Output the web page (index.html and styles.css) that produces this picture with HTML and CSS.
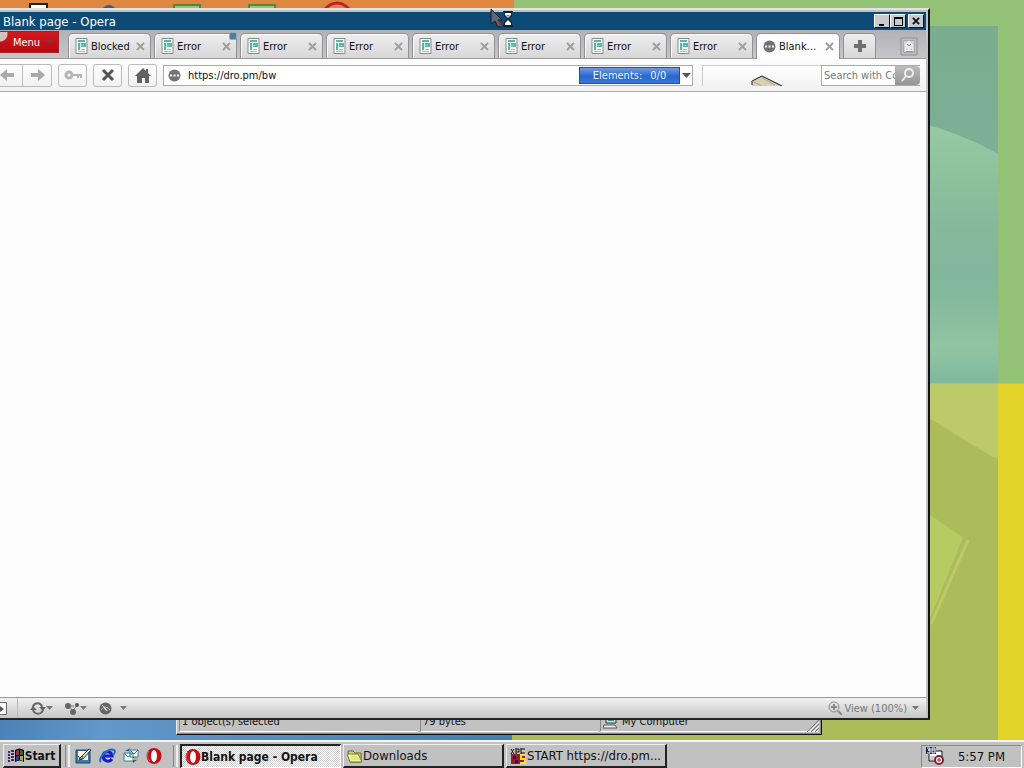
FILE: index.html
```html
<!DOCTYPE html>
<html lang="en">
<head>
    <meta charset="UTF-8">
    <meta name="viewport" content="width=device-width, initial-scale=1.0">
    <title>Blank page - Opera</title>
    <link rel="stylesheet" href="styles.css">
</head>
<body>
    <svg class="symbols" aria-hidden="true">
        <symbol id="page" viewBox="0 0 13 16">
            <path d="M1 .5h11v15H1z" fill="#fff" stroke="#888"/>
            <path d="M3 2h7v2H3zM3 5h2v7H3zM6 5h5v4H6z" fill="#55b9a5"/>
            <path d="M6 7.500h3M3 13.500h7M6 11.500h4" stroke="#a5bbb4"/>
            <path d="M5.500 4v8" stroke="#d7f3ee"/>
        </symbol>
        <symbol id="cross" viewBox="0 0 9 9">
            <path d="M1 1l7 7M8 1L1 8" stroke="currentColor" stroke-width="2"/>
        </symbol>
        <symbol id="arrow" viewBox="0 0 15 12">
            <path d="M0 6l7-6v4h7v4H7v4z" fill="#aaa"/>
        </symbol>
        <symbol id="globe" viewBox="0 0 13 13">
            <circle cx="6.500" cy="6.500" r="6" fill="#737373"/>
            <path d="M2 6.500h2M5.500 6.500h2M9 6.500h2" stroke="#fff" stroke-width="2"/>
        </symbol>
        <symbol id="opera" viewBox="0 0 16 16">
            <ellipse cx="8" cy="8" rx="7.500" ry="8" fill="#c50c17"/>
            <ellipse cx="8" cy="8" rx="3" ry="6" fill="#fff"/>
            <path d="M3 3C1 6 1 10 4 13" fill="none" stroke="#ee5960"/>
        </symbol>
        <symbol id="down" viewBox="0 0 7 4">
            <path d="M0 0h7L3.500 4z" fill="currentColor"/>
        </symbol>
    </svg>

    <main class="desktop">
        <svg class="wallpaper" viewBox="0 0 1024 741" preserveAspectRatio="none" aria-hidden="true">
            <defs>
                <linearGradient id="teal" x2="0" y2="1">
                    <stop offset="0" stop-color="#79ad8d"/>
                    <stop offset=".3" stop-color="#7eae96"/>
                    <stop offset=".75" stop-color="#84b89d"/>
                    <stop offset=".9" stop-color="#91c4a1"/>
                    <stop offset="1" stop-color="#7fb79f"/>
                </linearGradient>
                <linearGradient id="mist" x2="0" y2="1">
                    <stop offset="0" stop-color="#98c9a4"/>
                    <stop offset=".4" stop-color="#8dbf9d"/>
                    <stop offset="1" stop-color="#84b89d" stop-opacity="0"/>
                </linearGradient>
                <linearGradient id="blue">
                    <stop offset="0" stop-color="#4b83b8"/>
                    <stop offset=".2" stop-color="#6297c9"/>
                    <stop offset="1" stop-color="#437fae"/>
                </linearGradient>
            </defs>
            <path d="M0 0h1024v741H0z" fill="#93c276"/>
            <path d="M0 0h514v380H0z" fill="#df8741"/>
            <path d="M920 26h78v358h-78z" fill="url(#teal)"/>
            <path d="M920 123q40 10 78 31v130h-78z" fill="url(#mist)"/>
            <path d="M512 384h486v357H512z" fill="#adbc5a"/>
            <path d="M920 384h78v75l-6-2-72-44z" fill="#bdca69"/>
            <path d="M920 509l43 29-35 86h-8z" fill="#b8ca62"/>
            <path d="M968 541l-37 84" stroke="#bdca69" stroke-width="3"/>
            <path d="M998 384h26v357h-26z" fill="#e2d42b"/>
            <path d="M0 384h512v357H0z" fill="url(#blue)"/>
            <!-- tops of the desktop icons -->
            <path d="M30 9V4h17v5" fill="#fff" stroke="#222" stroke-width="2"/>
            <path d="M102 9q7-8 14 0z" fill="#2463a9"/>
            <path d="M174 9V5h26v4M249 9V5h26v4" fill="#9ac56b" stroke="#55843a" stroke-width="2"/>
            <path d="M325 9q12-12 24 0" fill="none" stroke="#c51d29" stroke-width="3"/>
        </svg>

        <section class="window explorer" aria-label="Explorer">
            <footer class="explorer-status">
                <span class="cell">1 object(s) selected</span>
                <span class="cell size">79 bytes</span>
                <span class="cell zone">
                    <svg width="15" height="14" viewBox="0 0 15 14"><path d="M3 0h10v8H3z" fill="#ddd" stroke="#333"/><path d="M5 2h6v4H5z" fill="#31968d"/><path d="M1 10h11l2 3H0z" fill="#eee" stroke="#555"/></svg>
                    My Computer
                </span>
                <svg class="grip" width="13" height="13"><path d="M1 13L13 1M5 13l8-8M9 13l4-4" stroke="#777"/><path d="M3 13L13 3M7 13l6-6" stroke="#fff"/></svg>
            </footer>
        </section>

        <section class="window opera">
            <header class="titlebar">
                <h1>Blank page - Opera</h1>
                <button class="caption" aria-label="Minimize"><svg width="9" height="9"><path d="M1 7h5v2H1z"/></svg></button>
                <button class="caption" aria-label="Maximize"><svg width="9" height="9"><path d="M0 0h9v9H0zM1 2v6h7V2z" fill-rule="evenodd"/></svg></button>
                <button class="caption close" aria-label="Close"><svg width="8" height="8"><use href="#cross"/></svg></button>
            </header>

            <nav class="tabs">
                <button class="menu">Menu <svg width="7" height="4"><use href="#down"/></svg></button>
                <div class="tab"><button class="label"><svg width="13" height="16"><use href="#page"/></svg>Blocked</button><button class="x" aria-label="Close tab"><svg width="9" height="9"><use href="#cross"/></svg></button></div>
                <div class="tab unread"><button class="label"><svg width="13" height="16"><use href="#page"/></svg>Error</button><button class="x" aria-label="Close tab"><svg width="9" height="9"><use href="#cross"/></svg></button></div>
                <div class="tab"><button class="label"><svg width="13" height="16"><use href="#page"/></svg>Error</button><button class="x" aria-label="Close tab"><svg width="9" height="9"><use href="#cross"/></svg></button></div>
                <div class="tab"><button class="label"><svg width="13" height="16"><use href="#page"/></svg>Error</button><button class="x" aria-label="Close tab"><svg width="9" height="9"><use href="#cross"/></svg></button></div>
                <div class="tab"><button class="label"><svg width="13" height="16"><use href="#page"/></svg>Error</button><button class="x" aria-label="Close tab"><svg width="9" height="9"><use href="#cross"/></svg></button></div>
                <div class="tab"><button class="label"><svg width="13" height="16"><use href="#page"/></svg>Error</button><button class="x" aria-label="Close tab"><svg width="9" height="9"><use href="#cross"/></svg></button></div>
                <div class="tab"><button class="label"><svg width="13" height="16"><use href="#page"/></svg>Error</button><button class="x" aria-label="Close tab"><svg width="9" height="9"><use href="#cross"/></svg></button></div>
                <div class="tab"><button class="label"><svg width="13" height="16"><use href="#page"/></svg>Error</button><button class="x" aria-label="Close tab"><svg width="9" height="9"><use href="#cross"/></svg></button></div>
                <div class="tab active"><button class="label"><svg width="13" height="13"><use href="#globe"/></svg>Blank...</button><button class="x" aria-label="Close tab"><svg width="9" height="9"><use href="#cross"/></svg></button></div>
                <button class="new-tab" aria-label="New tab"><svg width="12" height="12"><path d="M4 0h4v4h4v4H8v4H4V8H0V4h4z" fill="#707070"/></svg></button>
                <button class="trash" aria-label="Closed tabs"><svg width="18" height="19" viewBox="0 0 18 19"><path d="M1 1h16v17H1z" fill="#c0bfc5" stroke="#8f8e96"/><path d="M3.500 3.500h11v12h-11z" fill="#cfced3" stroke="#aaa9b1"/><path d="M5 13.500h8l-1-4H6z" fill="none" stroke="#eee"/><path d="M5 9l4-4 4 4M7 10l2 2 2-2" fill="none" stroke="#eee" stroke-width="2"/><path d="M7 7l2 2 2-2M6 14.500h7" fill="none" stroke="#96959d"/></svg></button>
            </nav>

            <div class="toolbar">
                <div class="history">
                    <button class="tool" aria-label="Back"><svg width="15" height="12"><use href="#arrow"/></svg></button>
                    <button class="tool forward" aria-label="Forward"><svg width="15" height="12"><use href="#arrow"/></svg></button>
                </div>
                <button class="tool" aria-label="Wand"><svg width="18" height="10"><circle cx="5" cy="5" r="3" fill="none" stroke="#b5b5b5" stroke-width="3"/><path d="M8 5h10M14 5v3M17 5v3" stroke="#b5b5b5" stroke-width="2"/></svg></button>
                <button class="tool" aria-label="Stop"><svg width="14" height="14"><path d="M2 2l10 10M12 2L2 12" stroke="#555" stroke-width="3"/></svg></button>
                <button class="tool" aria-label="Home"><svg width="16" height="15"><path d="M0 8l8-8 3 3V1h2v4l3 3h-2v7h-4v-5H7v5H2V8z" fill="#626262"/></svg></button>
                <div class="address">
                    <svg width="13" height="13"><use href="#globe"/></svg>
                    <input type="text" value="https://dro.pm/bw" aria-label="Address">
                    <div class="progress"><span>Elements:</span><span>0/0</span></div>
                    <button class="drop" aria-label="History"><svg width="9" height="5" viewBox="0 0 7 4"><use href="#down"/></svg></button>
                </div>
                <div class="animation"><svg width="32" height="11" viewBox="0 0 32 11"><path d="M1 6L11 1l20 10H1z" fill="#d6d0b7"/><path d="M1 10V6l10-5 20 10" fill="none" stroke="#111"/><path d="M1 6l10 5M11 3l13 7" stroke="#aaa487"/></svg></div>
                <div class="search">
                    <input type="text" placeholder="Search with Comodo" aria-label="Search">
                    <button class="go" aria-label="Search"><svg width="14" height="14"><circle cx="8" cy="5" r="4" fill="none" stroke="#eee" stroke-width="2"/><path d="M5 8l-4 5" stroke="#eee" stroke-width="2"/></svg></button>
                </div>
            </div>

            <div class="content"></div>

            <footer class="statusbar">
                <button class="panel" aria-label="Panels"><svg width="7" height="13"><path d="M0 .5h6.500v12H0" fill="#fff" stroke="#666"/><path d="M0 4l4 3-4 3z" fill="#555"/></svg></button>
                <button class="status-tool" aria-label="Sync"><svg width="16" height="13"><path d="M3 5c1-5 8-5 9 0M13 8c-2 5-8 5-10 0" fill="none" stroke="#666" stroke-width="2"/><path d="M9 5h7l-3 4zM0 8l3-4 4 4z" fill="#666"/></svg><svg width="7" height="4"><use href="#down"/></svg></button>
                <button class="status-tool" aria-label="Unite"><svg width="15" height="13"><path d="M4 4l4 5 4-6M5 4h4" fill="none" stroke="#777"/><circle cx="3" cy="4" r="3" fill="#666"/><circle cx="8" cy="10" r="3" fill="#666"/><circle cx="12" cy="3" r="2" fill="#555"/></svg><svg width="7" height="4"><use href="#down"/></svg></button>
                <button class="status-tool turbo" aria-label="Turbo"><svg width="13" height="13"><circle cx="6.500" cy="6.500" r="6" fill="#676767"/><path d="M2 8a5 5 0 0 1 9 0M3 3l5 6" fill="none" stroke="#bbb"/><path d="M4 3l5 6-3-1z" fill="#ddd"/></svg><svg width="7" height="4"><use href="#down"/></svg></button>
                <button class="view"><svg width="14" height="14"><circle cx="6" cy="6" r="5" fill="none" stroke="#888"/><path d="M3 6h6M6 3v6M10 10l4 4" stroke="#888" stroke-width="2"/></svg>View (100%)<svg class="view-arrow" width="7" height="4"><use href="#down"/></svg></button>
            </footer>
        </section>

        <svg class="cursor" width="24" height="20" viewBox="0 0 24 20" aria-hidden="true">
            <path d="M1 0l11 11H8l3 6-3 1-3-6-4 3z" fill="#5d6977" stroke="#15202c"/>
            <path d="M8 12l3 5" stroke="#a23635" stroke-width="2"/>
            <path d="M13 2h10v2h-1v3l-3 3 3 3v3h1v2H13v-2h1v-3l3-3-3-3V4h-1z" fill="#142334"/>
            <path d="M15 4h6v2l-3 3-3-3zM18 11l3 3v2h-6v-2z" fill="#fff"/>
            <path d="M16 6h4l-2 2z" fill="#4b85b0"/>
        </svg>
    </main>

    <footer class="taskbar">
        <button class="start"><svg width="17" height="16"><path d="M7 2q4-3 9 0v12q-4-3-9 0z"/><path d="M8 3q2-1 3-1v5H8z" fill="#a52d49"/><path d="M12 2q2 0 3 1v4h-3z" fill="#33652f"/><path d="M8 8h3v4q-2 0-3 1z" fill="#2b3f9b"/><path d="M12 8h3v5l-3-1z" fill="#b5aa3d"/><path d="M0 4h2M3 3h3M0 7h2M3 6h3M0 10h2M3 9h3M0 13h2M3 12h3" stroke="#4c2467" stroke-width="2"/></svg>Start</button>
        <span class="divider"></span>
        <nav class="quick">
            <button aria-label="Show desktop"><svg width="17" height="16"><path d="M1 2h14v13H1z" fill="#397da2" stroke="#164b70"/><path d="M3 3h10v9H3z" fill="#f7f4dd"/><path d="M5 10L14 1l2 1-8 9-4 1zM3 8l3 4 2-4" fill="#ddd" stroke="#333"/></svg></button>
            <button aria-label="Internet Explorer"><svg width="17" height="16"><path d="M13 11c-3 4-9 2-9-3s8-6 9 0H5" fill="none" stroke="#1420c8" stroke-width="3"/><path d="M2 14C-2 11 9-1 15 2c2 1 0 4-1 5" fill="none" stroke="#2468d6" stroke-width="2"/></svg></button>
            <button aria-label="Outlook Express"><svg width="16" height="16"><path d="M1 5h9v8H1zM7 2h8v7H7z" fill="#fff" stroke="#347c9c"/><path d="M1 5l4 4 5-4M7 2l4 4 4-4" fill="none" stroke="#347c9c"/><path d="M2 3l5-3-1 3h3M15 11l-5 4V9z" fill="#195fae"/><path d="M9 11h6" stroke="#cab94a" stroke-width="2"/></svg></button>
            <button aria-label="Opera"><svg width="16" height="16"><use href="#opera"/></svg></button>
        </nav>
        <span class="divider"></span>
        <div class="tasks">
            <button class="task current"><svg width="16" height="16"><use href="#opera"/></svg>Blank page - Opera</button>
            <button class="task"><svg width="16" height="14"><path d="M1 2h5l2 2h6v9H3z" fill="#d5d95d" stroke="#656725"/><path d="M0 5h11l4 8H3z" fill="#f4f6a2" stroke="#777a34"/><path d="M3 8h8M4 10h9" stroke="#d5d95d"/></svg>Downloads</button>
            <button class="task"><svg width="17" height="16"><path d="M1 6h14v10H1z" fill="#9b1938"/><path d="M1 1l3 5M4 1L1 6M6 0v6M6 1h3v3H6M11 0v6M11 1h4M11 5h4" fill="none" stroke="#111"/><path d="M3 8h3v3H3zM5 12h3v3H5z" fill="#28152a"/><path d="M16 7h-5v4h4v4h-5" fill="none" stroke="#ffe32b" stroke-width="2"/></svg>START https://dro.pm...</button>
        </div>
        <div class="tray">
            <svg width="18" height="18"><path d="M3 4h13v10H3z" fill="#fff" stroke="#112"/><path d="M0 0h10v7H0z" fill="#17255c"/><path d="M1 1h3v2H2h2v3H1M6 1h3v5H6zM6 3h3" fill="none" stroke="#fff"/><path d="M4 10h5M4 12h4" stroke="#999"/><circle cx="13" cy="13" r="4" fill="#fff" stroke="#8b1833" stroke-width="2"/><path d="M13 11v4M11 13h4" stroke="#8b1833"/></svg>
            <time datetime="17:57">5:57 PM</time>
        </div>
    </footer>
</body>
</html>
```
FILE: styles.css
```css
* {
    box-sizing: border-box;
}

body {
    margin: 0;
    height: 100vh;
    display: flex;
    flex-direction: column;
    overflow: hidden;
    font-family: Tahoma, "DejaVu Sans Condensed", "DejaVu Sans", sans-serif;
    font-size: 11px;
    color: #111;
}

button, input {
    font: inherit;
    color: inherit;
    margin: 0;
    padding: 0;
    border: 0;
    background: none;
    white-space: nowrap;
}

button {
    display: flex;
    align-items: center;
    justify-content: center;
}

svg {
    flex: none;
}

.symbols {
    position: absolute;
    width: 0;
    height: 0;
}

.desktop {
    position: relative;
    flex: 1;
    min-height: 0;
    overflow: hidden;
}

.wallpaper {
    display: block;
    width: 100%;
    height: 100%;
}

/* windows */
.window {
    position: absolute;
    display: flex;
    flex-direction: column;
    background: #c2c2c2;
}

.explorer {
    left: 176px;
    right: 202px;
    bottom: 5px;
    height: 100px;
    justify-content: flex-end;
    border: 1px solid #111;
    border-left-color: #eee;
    border-top: 0;
    padding: 2px;
    box-shadow: inset -1px -1px #888;
}

.explorer-status {
    display: flex;
    gap: 2px;
    height: 19px;
}

.cell {
    flex: 1;
    display: flex;
    align-items: center;
    gap: 4px;
    padding-left: 2px;
    border-left: 1px solid #888;
    border-bottom: 1px solid #fff;
    line-height: 14px;
}

.cell.size {
    flex: 0 0 178px;
}

.cell.zone {
    flex: 0 0 218px;
}

.grip {
    align-self: flex-end;
    margin-left: -14px;
}

.opera {
    top: 8px;
    left: 0;
    right: 94px;
    bottom: 20px;
    border-top: 2px solid #e3e3df;
    border-right: 2px solid #111;
    border-bottom: 2px solid #222;
    padding-top: 2px;
    padding-right: 2px;
}

.titlebar {
    display: flex;
    align-items: center;
    height: 18px;
    padding: 0 2px 0 3px;
    background: #0d4a75;
    color: #fff;
}

.titlebar h1 {
    flex: 1;
    margin: 0;
    font-size: 13px;
    font-weight: normal;
}

.caption {
    width: 16px;
    height: 14px;
    background: #c8cbd0;
    color: #111;
    border: 1px solid #fff;
    border-right-color: #111;
    border-bottom-color: #111;
}

.caption.close {
    margin-left: 2px;
}

/* tab bar */
.tabs {
    display: flex;
    align-items: flex-end;
    gap: 3px;
    height: 29px;
    background: linear-gradient(#b2b2b6, #c6c6c9);
    border-bottom: 1px solid #999;
}

.menu {
    align-self: flex-start;
    width: 59px;
    height: 22px;
    margin: 1px 6px 0 0;
    padding-left: 8px;
    gap: 6px;
    color: #fff;
    background: radial-gradient(circle at 0 2px, #d2c1bd 7px, transparent 8px), linear-gradient(#d51820, #b70711);
    border: 1px solid #982529;
    border-left: 0;
}

.menu svg {
    color: #84353a;
}

.tab {
    position: relative;
    display: flex;
    align-items: center;
    width: 83px;
    height: 25px;
    background: linear-gradient(#eee, #d7d7d7);
    border: 1px solid #929292;
    border-bottom: 0;
    border-radius: 5px 5px 0 0;
    box-shadow: inset 1px 1px #fafafa;
}

.tab.active {
    width: 84px;
    height: 26px;
    margin-bottom: -1px;
    background: #fdfdfd;
}

.label {
    flex: 1;
    justify-content: flex-start;
    gap: 3px;
    padding-left: 6px;
}

.x {
    width: 20px;
    color: #a0a0a0;
}

.unread::after {
    content: "";
    position: absolute;
    top: -2px;
    right: -1px;
    width: 6px;
    height: 6px;
    border-radius: 2px;
    background: #557b9b;
    border: 1px solid #91adc0;
}

.new-tab {
    width: 33px;
    height: 25px;
    background: linear-gradient(#eee, #d7d7d7);
    border: 1px solid #929292;
    border-bottom: 0;
    border-radius: 5px 5px 0 0;
}

.trash {
    margin: 0 8px 2px auto;
}

/* address row */
.toolbar {
    display: flex;
    align-items: center;
    gap: 6px;
    height: 33px;
    padding-right: 6px;
    background: linear-gradient(#fdfdfd, #f1f1f1);
    border-bottom: 1px solid #aaa;
}

.history {
    display: flex;
}

.tool {
    width: 29px;
    height: 23px;
    background: linear-gradient(#fff, #f1f1f1);
    border: 1px solid #bbb;
    border-radius: 3px;
}

.history .tool {
    width: 23px;
    justify-content: flex-start;
    border-left: 0;
    border-radius: 0;
}

.history .forward {
    justify-content: center;
    width: 29px;
    border-radius: 0 3px 3px 0;
}

.forward svg {
    transform: scaleX(-1);
}

.address {
    flex: 1;
    display: flex;
    align-items: center;
    height: 21px;
    padding-left: 4px;
    background: #fff;
    border: 1px solid #aaa;
}

.address input {
    flex: 1;
    min-width: 0;
    padding-left: 7px;
}

.progress {
    display: flex;
    justify-content: center;
    gap: 8px;
    width: 101px;
    height: 17px;
    line-height: 15px;
    color: #e5f1ff;
    background: linear-gradient(#719bdf, #2867cb 55%, #3978d8);
    border: 1px solid #234e9c;
}

.drop {
    width: 12px;
    color: #555;
}

.animation {
    display: flex;
    align-items: flex-end;
    justify-content: center;
    width: 119px;
    height: 21px;
    margin-left: 3px;
    padding-left: 9px;
    background: linear-gradient(#fff, #f3f3f3);
    border: 1px solid #ccc;
    border-right: 0;
    border-bottom: 0;
}

.search {
    display: flex;
    width: 99px;
    height: 21px;
    margin-left: -6px;
    background: #fff;
    border: 1px solid #aaa;
    border-right: 0;
}

.search input {
    flex: 1;
    min-width: 0;
    padding-left: 2px;
}

.search input::placeholder {
    color: #777;
}

.go {
    width: 25px;
    background: linear-gradient(#bbb, #959595);
    border-radius: 0 4px 4px 0;
}

.content {
    flex: 1;
    background: #fdfdfd;
}

/* status bar */
.statusbar {
    display: flex;
    align-items: center;
    height: 21px;
    padding-right: 7px;
    background: linear-gradient(#f1f1f1, #c6c6c6);
    border-top: 1px solid #999;
    color: #777;
}

.panel {
    align-self: stretch;
    justify-content: flex-start;
    width: 18px;
    margin-right: 11px;
    border-right: 1px solid #bbb;
}

.status-tool {
    width: 24px;
    margin-right: 11px;
}

.status-tool.turbo {
    width: 28px;
    gap: 8px;
}

.view {
    margin-left: auto;
    gap: 2px;
}

.view-arrow {
    margin-left: 3px;
}

.cursor {
    position: absolute;
    top: 9px;
    left: 490px;
}

/* taskbar */
.taskbar {
    display: flex;
    align-items: center;
    height: 28px;
    padding: 2px 2px 0 3px;
    background: #c1c1c1;
    border-top: 2px solid #f5f5f5;
    font-size: 13px;
}

.start, .task {
    height: 24px;
    border: 1px solid #eee;
    border-right: 2px solid #222;
    border-bottom: 2px solid #222;
}

.start {
    width: 58px;
    font-size: 12px;
    font-weight: bold;
}

.divider {
    width: 5px;
    height: 22px;
    margin-left: 4px;
    border-left: 1px solid #888;
    border-right: 2px solid #eee;
}

.quick {
    display: flex;
    gap: 7px;
    margin: 0 7px 0 5px;
}

.tasks {
    flex: 1;
    display: flex;
    gap: 2px;
    margin-left: 2px;
}

.task {
    width: 161px;
    padding: 0 2px 0 3px;
    justify-content: flex-start;
}

.task.current {
    font-size: 12px;
    font-weight: bold;
    background: repeating-conic-gradient(#fff 0 25%, #d1d1d1 0 50%) 0 0 / 2px 2px;
    border: 1px solid #fff;
    border-top: 2px solid #222;
    border-left: 2px solid #222;
}

.tray {
    display: flex;
    align-items: center;
    justify-content: space-between;
    width: 101px;
    height: 23px;
    padding: 0 16px 0 4px;
    border: 1px solid #fff;
    border-top-color: #888;
    border-left-color: #888;
    font-size: 13px;
}
```
